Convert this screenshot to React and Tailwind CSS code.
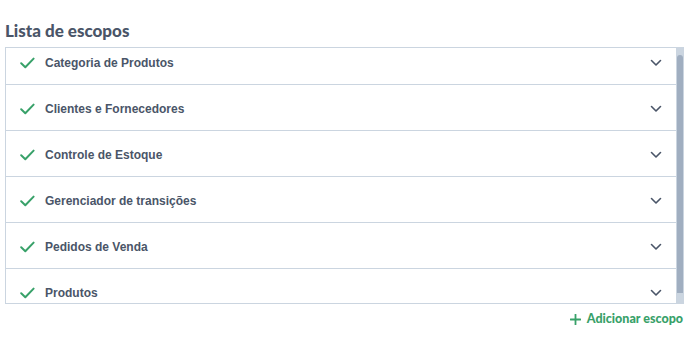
import React from "react";

const items = [
  "Categoria de Produtos",
  "Clientes e Fornecedores",
  "Controle de Estoque",
  "Gerenciador de transições",
  "Pedidos de Venda",
  "Produtos",
];

function Check() {
  return (
    <svg width="15" height="12" viewBox="0 0 15 12" fill="none">
      <path d="M1.2 6.3 L5.3 10.2 L13.6 1.6" stroke="#38a169" strokeWidth="2" strokeLinecap="round" strokeLinejoin="round" />
    </svg>
  );
}

function Chevron() {
  return (
    <svg width="12" height="8" viewBox="0 0 12 8" fill="none">
      <path d="M1.5 1.5 L6 6 L10.5 1.5" stroke="#4a5568" strokeWidth="1.6" strokeLinecap="round" strokeLinejoin="round" />
    </svg>
  );
}

function Plus() {
  return (
    <svg width="11" height="11" viewBox="0 0 11 11" fill="none">
      <path d="M5.5 0.5 V10.5 M0.5 5.5 H10.5" stroke="#38a169" strokeWidth="1.8" strokeLinecap="round" />
    </svg>
  );
}

export default function App() {
  return (
    <div className="w-[693px] h-[342px] bg-white pl-[5px] pr-[9px] pt-[20px]" style={{ fontFamily: "'Liberation Sans', Arial, sans-serif" }}>
      <h2 className="text-[17px] font-black text-[#4a5568] leading-[21px] mb-[6px]" style={{ fontFamily: "Lato, sans-serif" }}>
        Lista de escopos
      </h2>
      <div className="flex h-[257px]">
        <div className="flex-1 border-l border-t border-b border-[#cbd5e0] overflow-hidden">
          <div className="-mt-[9px]">
            {items.map((t) => (
              <div key={t} className="h-[46px] flex items-center pt-[2px] pl-[14px] pr-[14px] border-b border-[#cbd5e0]">
                <Check />
                <span className="ml-[10px] text-[12px] font-bold text-[#4a5568]">{t}</span>
                <span className="ml-auto flex items-center">
                  <Chevron />
                </span>
              </div>
            ))}
          </div>
        </div>
        <div className="w-[8px] bg-[#cbd5e0] pt-[8px] pb-[11px] px-[1px] flex flex-col">
          <div className="flex-1 bg-[#a0aec0] rounded-t-[3px]" />
        </div>
      </div>
      <div className="flex justify-end mt-[7px] pr-[1px]">
        <button className="flex items-center gap-[6px] text-[12.5px] font-black text-[#38a169] leading-[16px]" style={{ fontFamily: "Lato, sans-serif" }}>
          <Plus />
          Adicionar escopo
        </button>
      </div>
    </div>
  );
}
